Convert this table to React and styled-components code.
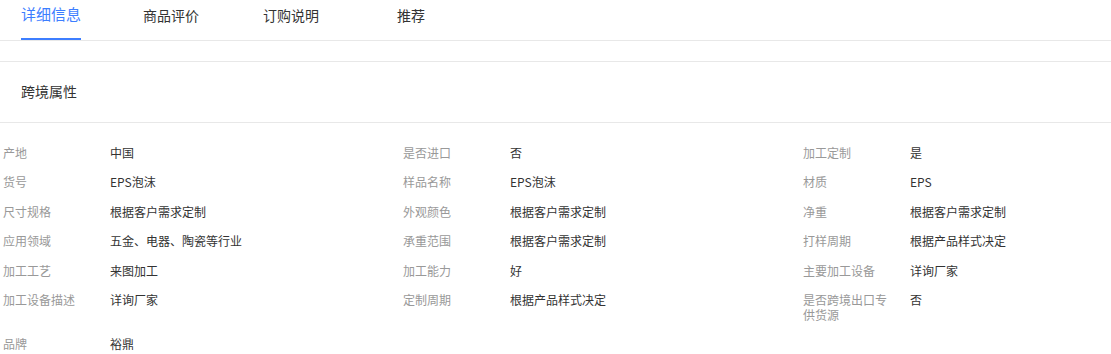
import styled, { createGlobalStyle } from "styled-components";

const GlobalStyle = createGlobalStyle`
    body {
        margin: 0;
        background: #ffffff;
        font-family: "Noto Sans CJK SC", "Noto Sans", sans-serif;
        color: #333333;
    }
`;

const Page = styled.div`
    width: 1111px;
    overflow: hidden;
`;

const TabBar = styled.div`
    display: flex;
    height: 40px;
    padding-left: 21px;
    border-bottom: 1px solid #e8e8e8;
`;

// tabs are 120px wide with centred labels; the first one sits flush at the left padding
const Tab = styled.div`
    width: 120px;
    display: flex;
    justify-content: center;

    &:first-child {
        width: 90px;
        justify-content: flex-start;
    }
`;

const TabLabel = styled.span`
    box-sizing: border-box;
    height: 40px;
    padding-top: ${(p) => (p.$active ? "4px" : "5px")};
    font-size: ${(p) => (p.$active ? "15px" : "14px")};
    line-height: 20px;
    color: ${(p) => (p.$active ? "#3d7eff" : "#333333")};
    border-bottom: 2px solid ${(p) => (p.$active ? "#3d7eff" : "transparent")};
    cursor: pointer;
`;

const Spacer = styled.div`
    height: 20px;
    border-bottom: 1px solid #e8e8e8;
`;

const SectionTitle = styled.div`
    box-sizing: border-box;
    height: 61px;
    display: flex;
    align-items: center;
    padding: 0 0 3px 21px;
    font-size: 14px;
    color: #333333;
    border-bottom: 1px solid #e8e8e8;
`;

const AttrGrid = styled.div`
    display: grid;
    grid-template-columns: 400px 400px 1fr;
    padding: 15px 0 0 3px;
`;

const AttrItem = styled.div`
    display: flex;
    padding: 7.5px 0;
    font-size: 12px;
    line-height: 14.5px;
`;

const AttrName = styled.div`
    width: 91px;
    margin-right: 16px;
    flex-shrink: 0;
    color: #999999;
`;

const AttrValue = styled.div`
    color: #333333;
`;

const tabs = ["详细信息", "商品评价", "订购说明", "推荐"];

const attrs = [
    ["产地", "中国"],
    ["是否进口", "否"],
    ["加工定制", "是"],
    ["货号", "EPS泡沫"],
    ["样品名称", "EPS泡沫"],
    ["材质", "EPS"],
    ["尺寸规格", "根据客户需求定制"],
    ["外观颜色", "根据客户需求定制"],
    ["净重", "根据客户需求定制"],
    ["应用领域", "五金、电器、陶瓷等行业"],
    ["承重范围", "根据客户需求定制"],
    ["打样周期", "根据产品样式决定"],
    ["加工工艺", "来图加工"],
    ["加工能力", "好"],
    ["主要加工设备", "详询厂家"],
    ["加工设备描述", "详询厂家"],
    ["定制周期", "根据产品样式决定"],
    ["是否跨境出口专供货源", "否"],
    ["品牌", "裕鼎"],
];

export default function App() {
    return (
        <Page>
            <GlobalStyle />
            <TabBar>
                {tabs.map((t, i) => (
                    <Tab key={t}>
                        <TabLabel $active={i === 0}>{t}</TabLabel>
                    </Tab>
                ))}
            </TabBar>
            <Spacer />
            <SectionTitle>跨境属性</SectionTitle>
            <AttrGrid>
                {attrs.map(([name, value]) => (
                    <AttrItem key={name}>
                        <AttrName>{name}</AttrName>
                        <AttrValue>{value}</AttrValue>
                    </AttrItem>
                ))}
            </AttrGrid>
        </Page>
    );
}
